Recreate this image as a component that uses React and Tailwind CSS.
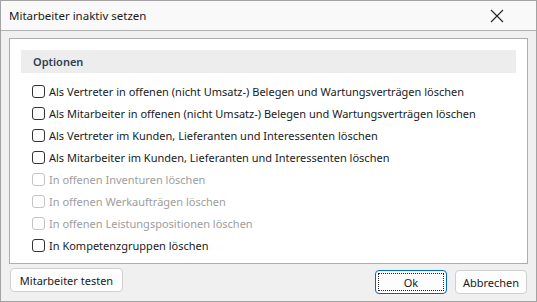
import React from 'react';

const options = [
  { label: 'Als Vertreter in offenen (nicht Umsatz-) Belegen und Wartungsverträgen löschen', enabled: true },
  { label: 'Als Mitarbeiter in offenen (nicht Umsatz-) Belegen und Wartungsverträgen löschen', enabled: true },
  { label: 'Als Vertreter im Kunden, Lieferanten und Interessenten löschen', enabled: true },
  { label: 'Als Mitarbeiter im Kunden, Lieferanten und Interessenten löschen', enabled: true },
  { label: 'In offenen Inventuren löschen', enabled: false },
  { label: 'In offenen Werkaufträgen löschen', enabled: false },
  { label: 'In offenen Leistungspositionen löschen', enabled: false },
  { label: 'In Kompetenzgruppen löschen', enabled: true },
];

const CheckRow = ({ label, enabled }) => (
  <div className="flex h-[22px] items-center">
    <span
      className={`ml-[11px] h-[13px] w-[13px] shrink-0 rounded-[3px] border bg-white ${
        enabled ? 'border-[#333333]' : 'border-[#c4c4c4]'
      }`}
    />
    <span className={`ml-[4px] ${enabled ? 'text-[#1a1a1a]' : 'text-[#9d9d9d]'}`}>{label}</span>
  </div>
);

const App = () => {
  return (
    <div
      className="flex h-[302px] w-[537px] flex-col border border-[#a3a3a3] bg-[#f0f0f0] text-[11px] leading-none"
      style={{ fontFamily: '"Noto Sans", "Open Sans", sans-serif' }}
    >
      {/* Title bar */}
      <div className="flex h-[30px] shrink-0 items-center justify-between border-b border-[#b0b0b0] bg-[#f9f9f9] pl-[8px] pr-[32px]">
        <span className="text-[11.5px] text-[#1a1a1a]">Mitarbeiter inaktiv setzen</span>
        <svg width="14" height="14" viewBox="0 0 14 14" className="mt-[1px]">
          <path d="M1 1 L13 13 M13 1 L1 13" stroke="#222" strokeWidth="1.1" fill="none" />
        </svg>
      </div>

      {/* Options panel */}
      <div className="mx-[8px] mt-[7px] h-[226px] border border-[#adadad] bg-white px-[11px] pt-[11px]">
        <div className="flex h-[23px] w-[495px] items-center bg-[#ededed] pl-[12px] font-semibold text-[#2d3e50]">
          Optionen
        </div>
        <div className="mt-[7px] flex flex-col">
          {options.map((o) => (
            <CheckRow key={o.label} label={o.label} enabled={o.enabled} />
          ))}
        </div>
      </div>

      {/* Buttons */}
      <div className="flex px-[9px]">
        <button className="mt-[4px] flex h-[24px] w-[113px] items-center justify-center rounded-[4px] border border-[#d0d0d0] bg-[#fdfdfd] text-[#1a1a1a]">
          Mitarbeiter testen
        </button>
        <div className="ml-auto mt-[6px] flex gap-[8px]">
          <button className="flex h-[24px] w-[72px] items-center justify-center rounded-[4px] border border-[#0067c0] bg-[#fdfdfd] p-[2px] text-[#1a1a1a]">
            <span className="flex h-full w-full items-center justify-center border border-dotted border-[#222]">Ok</span>
          </button>
          <button className="flex h-[24px] w-[72px] items-center justify-center rounded-[4px] border border-[#d0d0d0] bg-[#fdfdfd] text-[#1a1a1a]">
            Abbrechen
          </button>
        </div>
      </div>
    </div>
  );
};

export default App;
